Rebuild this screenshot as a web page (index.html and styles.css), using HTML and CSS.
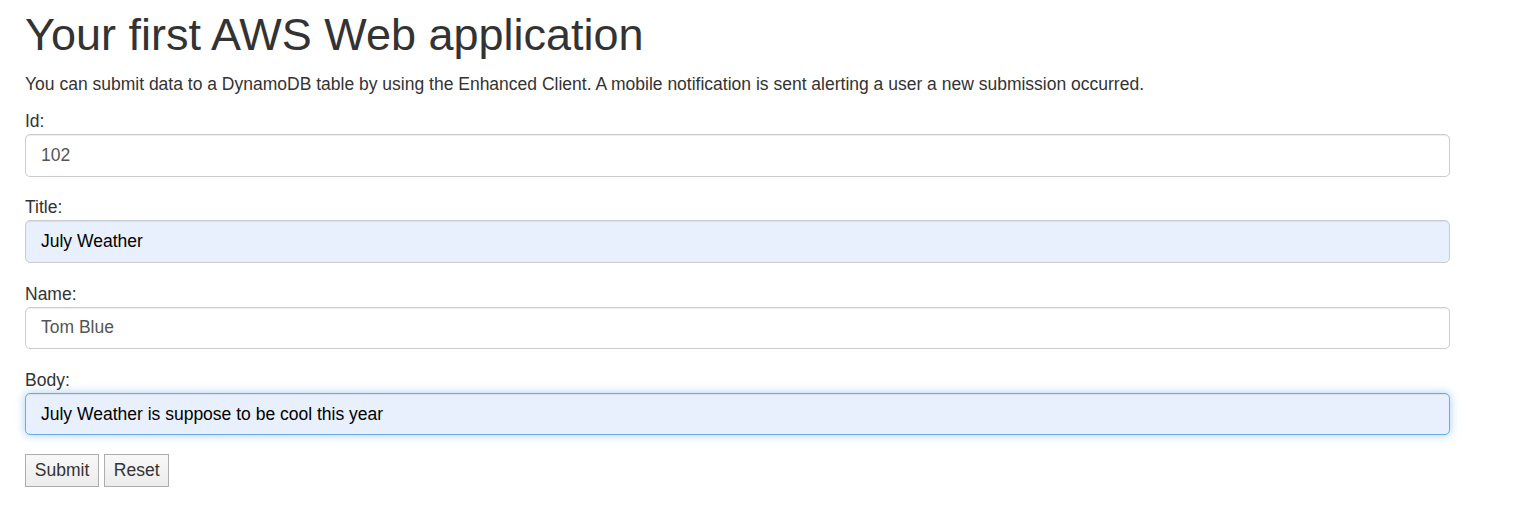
FILE: index.html
```html
<!DOCTYPE html>
<html lang="en">
<head>
<meta charset="utf-8">
<title>Your first AWS Web application</title>
<link rel="stylesheet" href="styles.css">
</head>
<body>
<div class="page">
  <h1 class="title">Your first AWS Web application</h1>
  <p class="intro">You can submit data to a DynamoDB table by using the Enhanced Client. A mobile notification is sent alerting a user a new submission occurred.</p>
  <form class="form">
    <div class="group">
      <label class="label" for="id">Id:</label>
      <input class="field" id="id" type="text" value="102">
    </div>
    <div class="group">
      <label class="label" for="title">Title:</label>
      <input class="field autofill" id="title" type="text" value="July Weather">
    </div>
    <div class="group">
      <label class="label" for="name">Name:</label>
      <input class="field" id="name" type="text" value="Tom Blue">
    </div>
    <div class="group">
      <label class="label" for="body">Body:</label>
      <input class="field autofill focus" id="body" type="text" value="July Weather is suppose to be cool this year">
    </div>
    <div class="actions">
      <button class="btn" type="button">Submit</button>
      <button class="btn" type="button">Reset</button>
    </div>
  </form>
</div>
</body>
</html>
```
FILE: styles.css
```css
* { box-sizing: border-box; }
html, body { margin: 0; padding: 0; background: #fff; }
body {
  font-family: "Liberation Sans", Arial, sans-serif;
  font-size: 17.5px;
  line-height: 25px;
  color: #333;
}
.page {
  padding: 10px 0 0 25px;
  width: 1450px;
}
.title {
  font-size: 45px;
  font-weight: 500;
  line-height: 49.5px;
  margin: 0 0 12.5px;
}
.intro {
  margin: 0 0 12px;
}
.form { margin: 0; }
.group {
  margin-bottom: 18.75px;
}
.label {
  display: block;
  font-weight: normal;
  margin: 0;
}
.field {
  display: block;
  width: 100%;
  height: 42.5px;
  padding: 7.5px 15px;
  font-family: inherit;
  font-size: 17.5px;
  line-height: 25px;
  color: #555;
  background: #fff;
  border: 1.25px solid #ccc;
  border-radius: 5px;
  box-shadow: inset 0 1px 1px rgba(0,0,0,.075);
  outline: none;
}
.field.autofill {
  background: #e8f0fe;
  color: #000;
}
.field.focus {
  border-color: #66afe9;
  box-shadow: inset 0 1px 1px rgba(0,0,0,.075), 0 0 10px rgba(102,175,233,.6);
}
.actions {
  display: flex;
  gap: 5px;
}
.btn {
  font-family: inherit;
  font-size: 17.5px;
  line-height: 21px;
  color: #333;
  height: 33px;
  padding: 4px 8.8px;
  background: linear-gradient(#f8f8f8, #ececec);
  border: 1px solid #adadad;
  border-radius: 0;
}
```
